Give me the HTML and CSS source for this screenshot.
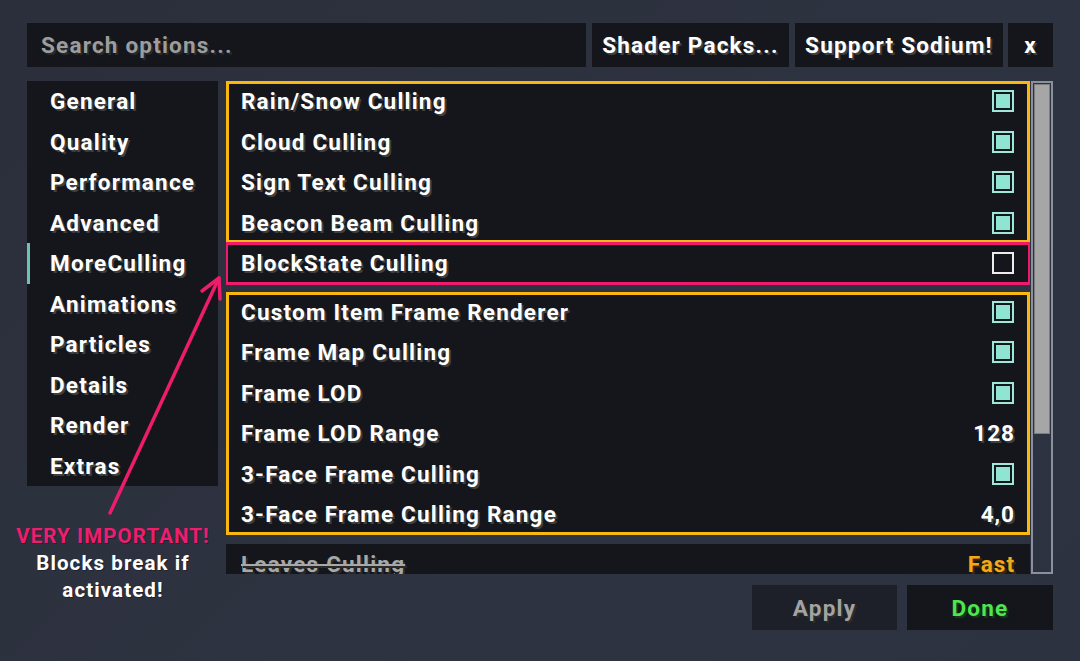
FILE: index.html
```html
<!DOCTYPE html>
<html>
<head>
<meta charset="utf-8">
<link rel="stylesheet" href="styles.css">
</head>
<body>
<div class="screen">
  <div class="topbar">
    <div class="search">Search options...</div>
    <div class="btn shader">Shader Packs...</div>
    <div class="btn support">Support Sodium!</div>
    <div class="btn close">x</div>
  </div>
  <div class="main">
    <nav class="sidebar">
      <div class="tab">General</div>
      <div class="tab">Quality</div>
      <div class="tab">Performance</div>
      <div class="tab">Advanced</div>
      <div class="tab active">MoreCulling</div>
      <div class="tab">Animations</div>
      <div class="tab">Particles</div>
      <div class="tab">Details</div>
      <div class="tab">Render</div>
      <div class="tab">Extras</div>
    </nav>
    <div class="list">
      <div class="group g1">
        <div class="hl yellow">
          <div class="row"><span>Rain/Snow Culling</span><span class="cb on"></span></div>
          <div class="row"><span>Cloud Culling</span><span class="cb on"></span></div>
          <div class="row"><span>Sign Text Culling</span><span class="cb on"></span></div>
          <div class="row"><span>Beacon Beam Culling</span><span class="cb on"></span></div>
        </div>
        <div class="hl pink">
          <div class="row"><span>BlockState Culling</span><span class="cb"></span></div>
        </div>
      </div>
      <div class="group g2 hl yellow">
        <div class="row"><span>Custom Item Frame Renderer</span><span class="cb on"></span></div>
        <div class="row"><span>Frame Map Culling</span><span class="cb on"></span></div>
        <div class="row"><span>Frame LOD</span><span class="cb on"></span></div>
        <div class="row"><span>Frame LOD Range</span><span class="val">128</span></div>
        <div class="row"><span>3-Face Frame Culling</span><span class="cb on"></span></div>
        <div class="row"><span>3-Face Frame Culling Range</span><span class="val">4,0</span></div>
      </div>
      <div class="group g3">
        <div class="row"><span class="struck">Leaves Culling</span><span class="val fast">Fast</span></div>
      </div>
    </div>
    <div class="scrollbar"><div class="thumb"></div></div>
  </div>
  <div class="footer">
    <div class="fbtn apply">Apply</div>
    <div class="fbtn done">Done</div>
  </div>
  <div class="note">
    <div class="warn">VERY IMPORTANT!</div>
    <div>Blocks break if</div>
    <div>activated!</div>
  </div>
  <svg class="arrow" width="1080" height="661" viewBox="0 0 1080 661">
    <g stroke="#ee1c6b" stroke-width="3.5" stroke-linecap="round" fill="none">
      <line x1="110" y1="513" x2="218" y2="280"/>
      <line x1="219" y1="278" x2="202" y2="291"/>
      <line x1="219" y1="278" x2="220" y2="299"/>
    </g>
  </svg>
</div>
</body>
</html>
```
FILE: styles.css
```css
html, body {
  margin: 0;
  padding: 0;
}
body {
  width: 1080px;
  height: 661px;
  overflow: hidden;
  background: #2c313e;
  font-family: Roboto, "Liberation Sans", sans-serif;
  font-weight: 700;
  font-size: 22.5px;
  letter-spacing: 1.2px;
  color: #ffffff;
}
.screen {
  position: relative;
  width: 1080px;
  height: 661px;
  box-sizing: border-box;
  padding: 23px 27px 0 27px;
  background: linear-gradient(135deg, #2b2f3b 0%, #2e3341 60%, #2d3240 100%);
}
.topbar {
  display: flex;
  height: 44px;
  gap: 6px;
}
.search {
  flex: 1;
  background: #14161b;
  color: #9d9d9d;
  padding-left: 14px;
  display: flex;
  align-items: center;
  text-shadow: 2px 2px 0 #27292c;
}
.btn {
  background: #14161b;
  display: flex;
  align-items: center;
  justify-content: center;
  text-shadow: 2px 2px 0 #3f3f3f;
}
.shader { width: 197px; }
.support { width: 208px; }
.close { width: 45px; margin-left: -1px; }
.main {
  display: flex;
  margin-top: 14px;
  height: 494px;
}
.sidebar {
  width: 191px;
  height: 405px;
  background: #14161b;
  margin-right: 8px;
  display: flex;
  flex-direction: column;
}
.tab {
  height: 40.5px;
  display: flex;
  align-items: center;
  padding-left: 23px;
  text-shadow: 2px 2px 0 #3f3f3f;
  position: relative;
}
.tab.active::before {
  content: "";
  position: absolute;
  left: 0;
  top: 0;
  width: 3px;
  height: 40.5px;
  background: #6cc3b3;
}
.list {
  width: 804px;
  height: 493px;
  overflow: hidden;
}
.group {
  background: #14161b;
}
.g1 { margin-bottom: 8px; }
.g2 { margin-bottom: 9.5px; }
.hl {
  outline-style: solid;
  outline-width: 3px;
  outline-offset: -3px;
}
.yellow { outline-color: #f8b80f; }
.pink { outline-color: #ef1a6c; }
.g1 .pink { outline-offset: -2px; }
.row {
  height: 40.5px;
  display: flex;
  align-items: center;
  justify-content: space-between;
  padding: 0 16px 0 15px;
  text-shadow: 2px 2px 0 #3f3f3f;
}
.val {
  letter-spacing: 1px;
  margin-right: -1px;
}
.cb {
  width: 22px;
  height: 22px;
  box-sizing: border-box;
  border: 2px solid #ececec;
  background: #14161b;
}
.cb.on {
  border-color: #9fe7d8;
  background: #8fe4d2;
  box-shadow: inset 0 0 0 2px #14161b;
}
.fast {
  color: #f7a81a;
  text-shadow: 2px 2px 0 #3d2a00;
}
.struck {
  color: #a8a8a8;
  text-decoration: line-through;
  text-decoration-thickness: 2px;
  text-shadow: 2px 2px 0 #2a2a2a;
}
.scrollbar {
  margin-left: 1px;
  width: 22px;
  height: 493px;
  box-sizing: border-box;
  border: 2px solid #8b909c;
  padding: 1px;
}
.thumb {
  height: 350px;
  background: #a6a6a6;
  border: 1px solid #7d7d7d;
  box-sizing: border-box;
}
.footer {
  display: flex;
  justify-content: flex-end;
  gap: 10px;
  margin-top: 10px;
}
.fbtn {
  width: 146px;
  height: 45px;
  display: flex;
  align-items: center;
  justify-content: center;
}
.apply {
  width: 145px;
  background: #1d2028;
  color: #a3a3a3;
  text-shadow: 2px 2px 0 #2c2c2c;
}
.done {
  background: #14161b;
  color: #4fe54f;
  text-shadow: 2px 2px 0 #15391a;
}
.note {
  position: absolute;
  left: 4px;
  top: 523px;
  width: 218px;
  text-align: center;
  font-size: 20.5px;
  letter-spacing: 1.1px;
  line-height: 27px;
  color: #ffffff;
  text-shadow: 1px 1px 0 #1f2230;
}
.warn {
  color: #ef1d6e;
}
.arrow {
  position: absolute;
  left: 0;
  top: 0;
  pointer-events: none;
}
```
